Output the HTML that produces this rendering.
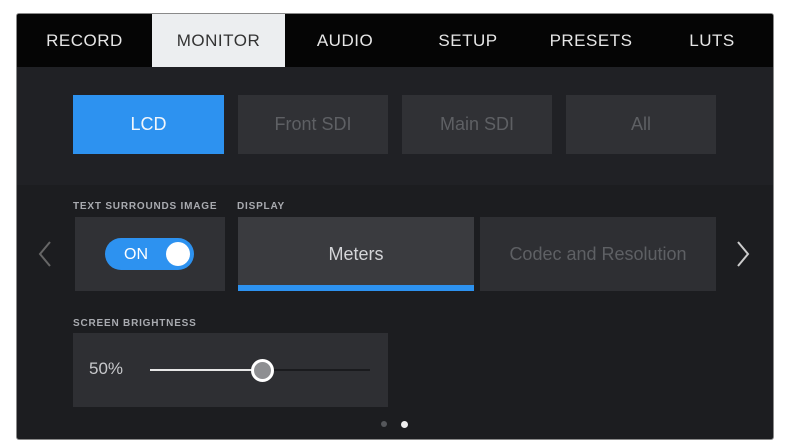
<!DOCTYPE html><html><head><style>
body{margin:0;width:788px;height:446px;background:#fff;position:relative;overflow:hidden;font-family:"Liberation Sans",sans-serif}
.scr{position:absolute;left:16px;top:13px;width:756px;height:425px;background:#1c1d20;border:1px solid #8a8a8a;border-radius:3px;overflow:hidden}
.a{position:absolute}
.tabs{left:0;top:0;width:756px;height:53px;background:#050505}
.tab{position:absolute;top:0;height:53px;line-height:54px;color:#e6e6e6;font-size:17px;text-align:center;letter-spacing:.5px}
.btn{position:absolute;top:81px;height:59px;background:#303135;color:#5e6064;font-size:18px;text-align:center;line-height:59px}
.lbl{position:absolute;color:#a9abb0;font-size:10px;font-weight:bold;letter-spacing:.8px}
</style></head><body><div class="scr">
<div class="a tabs"></div>
<div class="tab" style="left:0;width:135px">RECORD</div>
<div class="tab" style="left:135px;width:133px;background:#eceef0;color:#333">MONITOR</div>
<div class="tab" style="left:268px;width:120px">AUDIO</div>
<div class="tab" style="left:391px;width:120px">SETUP</div>
<div class="tab" style="left:514px;width:120px">PRESETS</div>
<div class="tab" style="left:635px;width:120px">LUTS</div>
<div class="a" style="left:0;top:53px;width:756px;height:118px;background:#202125"></div>
<div class="btn" style="left:56px;width:151px;background:#2d92f0;color:#f2f6fb">LCD</div>
<div class="btn" style="left:221px;width:150px">Front SDI</div>
<div class="btn" style="left:385px;width:150px">Main SDI</div>
<div class="btn" style="left:549px;width:150px">All</div>
<div class="lbl" style="left:56px;top:187px">TEXT SURROUNDS IMAGE</div>
<div class="lbl" style="left:220px;top:187px">DISPLAY</div>
<div class="a" style="left:58px;top:203px;width:150px;height:74px;background:#303135"></div>
<div class="a" style="left:88px;top:224px;width:89px;height:32px;border-radius:16px;background:#2d92f0"></div>
<div class="a" style="left:107px;top:225px;line-height:32px;color:#fff;font-size:16px">ON</div>
<div class="a" style="left:149px;top:228px;width:24px;height:24px;border-radius:50%;background:#fff"></div>
<div class="a" style="left:221px;top:203px;width:236px;height:74px;background:#3a3b3f;color:#d4d5d8;font-size:18px;text-align:center;line-height:74px">Meters</div>
<div class="a" style="left:221px;top:271px;width:236px;height:6px;background:#2d92f0"></div>
<div class="a" style="left:463px;top:203px;width:236px;height:74px;background:#2e2f33;color:#5e6064;font-size:18px;text-align:center;line-height:74px">Codec and Resolution</div>
<svg class="a" style="left:19px;top:225px" width="18" height="30"><path d="M14 3L4 15L14 27" stroke="#666" stroke-width="2" fill="none"/></svg>
<svg class="a" style="left:717px;top:225px" width="18" height="30"><path d="M4 3L14 15L4 27" stroke="#ccc" stroke-width="2" fill="none"/></svg>
<div class="lbl" style="left:56px;top:304px">SCREEN BRIGHTNESS</div>
<div class="a" style="left:56px;top:319px;width:315px;height:74px;background:#2e2f33"></div>
<div class="a" style="left:72px;top:345px;color:#c8c9cc;font-size:17px">50%</div>
<div class="a" style="left:133px;top:355px;width:112px;height:2px;background:#e6e6e6"></div>
<div class="a" style="left:245px;top:355px;width:108px;height:2px;background:#1a1b1e"></div>
<div class="a" style="left:234px;top:345px;width:17px;height:17px;border-radius:50%;background:#8e8f92;border:3px solid #fff"></div>
<div class="a" style="left:364px;top:407px;width:6px;height:6px;border-radius:50%;background:#55575b"></div>
<div class="a" style="left:384px;top:407px;width:7px;height:7px;border-radius:50%;background:#eee"></div>
</div></body></html>
